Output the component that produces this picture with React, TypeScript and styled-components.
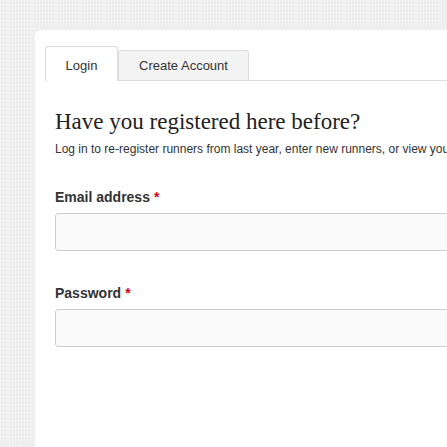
import styled, { createGlobalStyle } from "styled-components";

const GlobalStyle = createGlobalStyle`
  html, body {
    margin: 0;
    padding: 0;
    overflow: hidden;
  }
  body {
    background-color: #eeeeee;
    background-image:
      repeating-linear-gradient(90deg, rgba(255,255,255,0.35) 0 1px, transparent 1px 3px),
      repeating-linear-gradient(0deg, rgba(0,0,0,0.015) 0 1px, transparent 1px 4px);
    font-family: "Liberation Sans", Arial, sans-serif;
    color: #333;
  }
`

const Page = styled.div`
  width: 447px;
  height: 447px;
  padding: 30px 0 0 35px;
  box-sizing: border-box;
  overflow: hidden;
`

const Panel = styled.div`
  width: 900px;
  min-height: 500px;
  background: #fff;
  border-radius: 6px;
  padding: 16px 0 0 10px;
  box-sizing: border-box;
`

const Tabs = styled.div`
  display: flex;
  align-items: flex-end;
  height: 34px;
  border-bottom: 1px solid #dddddd;
`

const Tab = styled.div<{ $active?: boolean }>`
  box-sizing: border-box;
  display: flex;
  align-items: center;
  justify-content: center;
  font-size: 13px;
  color: #333;
  border: 1px solid #dddddd;
  border-bottom: none;
  border-radius: 3px 3px 0 0;
  background: ${(p) => (p.$active ? "#fff" : "#f3f3f3")};
  margin-bottom: ${(p) => (p.$active ? "-1px" : "0")};
  height: ${(p) => (p.$active ? "35px" : "30px")};
  padding-top: ${(p) => (p.$active ? "3px" : "0")};
  width: ${(p) => (p.$active ? "73px" : "131px")};
`

const Body = styled.div`
  padding: 28px 0 0 10px;
`

const Heading = styled.h2`
  margin: 0;
  font-family: "Liberation Serif", "Times New Roman", serif;
  font-weight: normal;
  font-size: 23px;
  line-height: 26px;
  color: #222;
`

const Lead = styled.p`
  margin: 6px 0 0;
  font-size: 12px;
  line-height: 16px;
  color: #333;
  white-space: nowrap;
`

const Field = styled.div<{ $first?: boolean }>`
  margin-top: ${(p) => (p.$first ? "32px" : "34px")};
`

const Label = styled.label`
  display: block;
  font-size: 14px;
  font-weight: bold;
  line-height: 16px;
  color: #333;
  margin-bottom: 8px;
`

const Required = styled.span`
  color: #d0021b;
  font-weight: bold;
  margin-left: 4px;
`

const Input = styled.input`
  display: block;
  width: 700px;
  height: 38px;
  box-sizing: border-box;
  border: 1px solid #cccccc;
  border-radius: 3px;
  background: #fafafa;
  outline: none;
`

export default function App() {
  return (
    <>
      <GlobalStyle />
      <Page>
        <Panel>
          <Tabs>
            <Tab $active>Login</Tab>
            <Tab>Create Account</Tab>
          </Tabs>
          <Body>
            <Heading>Have you registered here before?</Heading>
            <Lead>
              Log in to re-register runners from last year, enter new runners, or view your registration history.
            </Lead>
            <Field $first>
              <Label>
                Email address<Required>*</Required>
              </Label>
              <Input type="email" />
            </Field>
            <Field>
              <Label>
                Password<Required>*</Required>
              </Label>
              <Input type="password" />
            </Field>
          </Body>
        </Panel>
      </Page>
    </>
  )
}
